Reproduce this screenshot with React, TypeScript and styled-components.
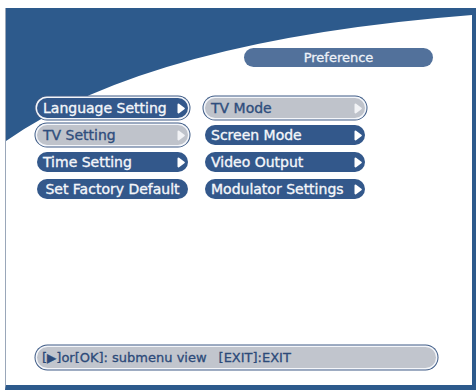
import React from 'react'
import styled, { createGlobalStyle, css } from 'styled-components'

const GlobalStyle = createGlobalStyle`
  html, body {
    margin: 0;
    padding: 0;
    background: #fff;
  }
  body {
    font-family: "DejaVu Sans", "Liberation Sans", sans-serif;
  }
`

const Page = styled.div`
  width: 476px;
  height: 390px;
  padding: 8px 0 0 5px;
  box-sizing: border-box;
  overflow: hidden;
`

const Screen = styled.div`
  position: relative;
  width: 471px;
  height: 382px;
  box-sizing: border-box;
  border-left: 1px solid #9aa7b9;
  border-right: 4px solid #2d5a8c;
  border-bottom: 5px solid #2d5a8c;
  background: #fff;
  display: flex;
  flex-direction: column;
  padding: 40px 0 17px 31px;
`

const Backdrop = styled.svg`
  position: absolute;
  left: 0;
  top: 0;
  width: 466px;
  height: 377px;
  z-index: 0;
`

const Content = styled.div`
  position: relative;
  z-index: 1;
  display: flex;
  flex-direction: column;
  flex: 1;
`

const TitlePill = styled.div`
  margin-left: 207px;
  width: 189px;
  height: 19px;
  border-radius: 10px;
  background: #52719b;
  color: #eef2f8;
  font-size: 13px;
  line-height: 19px;
  text-align: center;
  -webkit-text-stroke: 0.3px #eef2f8;
`

const Menus = styled.div`
  display: flex;
  gap: 17px;
  margin-top: 31px;
`

const Column = styled.div<{ $width: number }>`
  display: flex;
  flex-direction: column;
  gap: 7px;
  width: ${p => p.$width}px;
`

const outline = css`
  box-shadow: 0 0 0 1.5px #f4f6fa, 0 0 0 2.5px #3e5b86;
`

const Item = styled.div<{ $selected?: boolean; $outlined?: boolean; $center?: boolean }>`
  height: 20px;
  border-radius: 10px;
  display: flex;
  align-items: center;
  justify-content: ${p => (p.$center ? 'center' : 'space-between')};
  padding: 0 3px 0 ${p => (p.$center ? '3px' : '6px')};
  box-sizing: border-box;
  font-size: 14px;
  white-space: nowrap;
  background: ${p => (p.$selected ? '#bfc3cb' : '#33588b')};
  color: ${p => (p.$selected ? '#2f4e7d' : '#f4f6fa')};
  -webkit-text-stroke: 0.35px ${p => (p.$selected ? '#2f4e7d' : '#f4f6fa')};
  ${p => p.$outlined && outline}
`

const ArrowIcon = styled.svg`
  width: 8px;
  height: 11px;
  flex: none;
`

const HelpBar = styled.div`
  margin-top: auto;
  width: 399px;
  height: 21px;
  border-radius: 11px;
  background: #c1c5cd;
  ${outline}
  display: flex;
  align-items: center;
  padding-left: 5px;
  box-sizing: border-box;
  font-size: 13px;
  color: #2c4a79;
  -webkit-text-stroke: 0.3px #2c4a79;
  white-space: nowrap;
`

const HelpGap = styled.span`
  display: inline-block;
  width: 12px;
`

const Tri = styled.span`
  font-size: 12px;
`

const Arrow: React.FC<{ light?: boolean }> = ({ light }) => (
  <ArrowIcon viewBox="0 0 8 11">
    <polygon
      points="1.5,1.5 6.8,5.5 1.5,9.5"
      fill={light ? '#f2f3f6' : '#ffffff'}
      stroke={light ? '#f2f3f6' : '#ffffff'}
      strokeWidth="2"
      strokeLinejoin="round"
    />
  </ArrowIcon>
)

const leftItems = [
  { label: 'Language Setting', outlined: true, arrow: true },
  { label: 'TV Setting', selected: true, outlined: true, arrow: true },
  { label: 'Time Setting', arrow: true },
  { label: 'Set Factory Default', center: true }
]

const rightItems = [
  { label: 'TV Mode', selected: true, outlined: true },
  { label: 'Screen Mode' },
  { label: 'Video Output' },
  { label: 'Modulator Settings' }
]

const App: React.FC = () => {
  return (
    <Page>
      <GlobalStyle />
      <Screen>
        <Backdrop viewBox="6 8 466 377" preserveAspectRatio="none">
          <path d="M6 8 L472 8 L472 15 Q150 40 6 141 Z" fill="#2d5a8c" />
        </Backdrop>
        <Content>
          <TitlePill>Preference</TitlePill>

          <Menus>
            <Column $width={151}>
              {leftItems.map(item => (
                <Item
                  key={item.label}
                  $selected={item.selected}
                  $outlined={item.outlined}
                  $center={item.center}
                >
                  <span>{item.label}</span>
                  {item.arrow && <Arrow light={item.selected} />}
                </Item>
              ))}
            </Column>
            <Column $width={160}>
              {rightItems.map(item => (
                <Item key={item.label} $selected={item.selected} $outlined={item.outlined}>
                  <span>{item.label}</span>
                  <Arrow light={item.selected} />
                </Item>
              ))}
            </Column>
          </Menus>

          <HelpBar>
            [<Tri>▶</Tri>]or[OK]: submenu view<HelpGap />[EXIT]:EXIT
          </HelpBar>
        </Content>
      </Screen>
    </Page>
  )
}

export default App
